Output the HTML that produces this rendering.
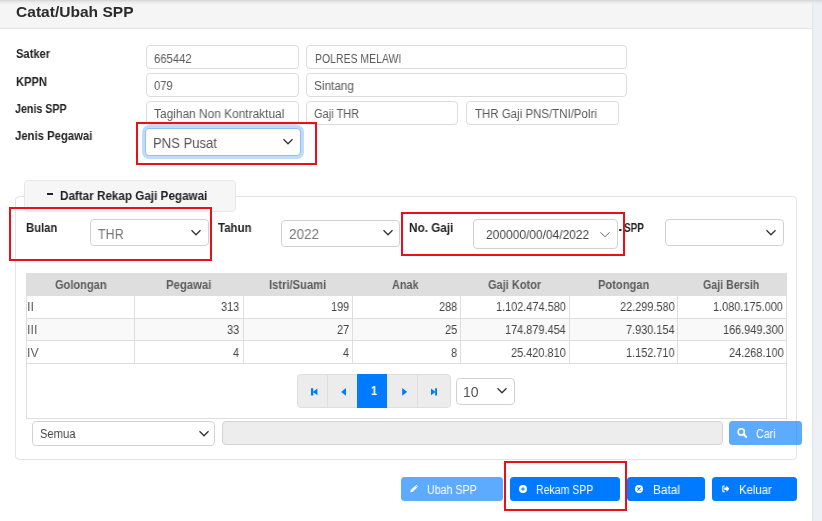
<!DOCTYPE html>
<html><head><meta charset="utf-8">
<style>
*{box-sizing:border-box;margin:0;padding:0}
html,body{width:822px;height:521px;overflow:hidden;background:#fff;font-family:"Liberation Sans",sans-serif;color:#333}
body{position:relative}
.abs,.t,.chev{position:absolute}
.t{white-space:nowrap;transform-origin:0 50%;display:block;will-change:transform}
.side{left:812px;top:0;width:10px;height:521px;background:#edf1f6;box-shadow:inset 2px 0 2px -1px #e0e4e9}
.hdr{left:0;top:0;width:812px;height:29px;background:#f5f5f5;border-bottom:1px solid #e3e3e3}
.hdr:before{content:"";position:absolute;left:0;top:0;width:100%;height:4.5px;background:linear-gradient(#d4d4d4,#ebebeb 45%,#f5f5f5)}
.side:before{content:"";position:absolute;left:0;top:0;width:100%;height:4.5px;background:linear-gradient(#d2d5d9,#e5e9ee 45%,rgba(237,241,246,0))}
.inp{height:23.6px;border:1px solid #dcdcdc;border-radius:4px;background:#fff}
.sel{border:1px solid #d2d2d2;border-radius:4px;background:#fff}
.red{border:2.5px solid #ea1019;z-index:5}
.fs{left:15.3px;top:196px;width:781.5px;height:263.7px;border:1px solid #e4e4e4;border-radius:4px}
.legend{left:24.3px;top:180.3px;width:211.5px;height:31.4px;background:#f6f6f6;border:1px solid #e8e8e8;border-radius:4px}
.btn{height:24px;border-radius:3.5px;top:477px}
.pg{height:34px;top:374px;background:#ececec;border:1px solid #dedede}
.vl{top:296px;width:1px;height:67px;background:#dedede}
.hl{left:26px;width:760.5px;height:1px;background:#dedede}
</style></head><body>
<div class="abs side"></div>
<div class="abs hdr"></div>

<div class="abs inp" style="left:146.3px;top:45.4px;width:153px"></div>
<div class="abs inp" style="left:306.2px;top:45.4px;width:320.6px"></div>
<div class="abs inp" style="left:146.3px;top:73.2px;width:153px"></div>
<div class="abs inp" style="left:306.2px;top:73.2px;width:320.6px"></div>
<div class="abs inp" style="left:146.3px;top:101px;width:153px"></div>
<div class="abs inp" style="left:306.2px;top:101px;width:152.3px"></div>
<div class="abs inp" style="left:466.3px;top:101px;width:152.3px"></div>

<div class="abs sel" style="left:145.3px;top:127.7px;width:155.4px;height:28.1px;border-color:#8ec0fb;box-shadow:0 0 0 3px #bfdbfd"></div>
<svg class="chev" style="left:282.3px;top:138.3px" width="12" height="8" viewBox="0 0 12 8"><path d="M1.5 1.3 L6 5.8 L10.5 1.3" fill="none" stroke="#333" stroke-width="1.3"/></svg>
<div class="abs red" style="left:135.9px;top:122px;width:181.2px;height:42.7px"></div>

<div class="abs fs"></div>
<div class="abs legend"></div>
<div class="abs" style="left:46.7px;top:192.5px;width:6.8px;height:2.3px;background:#222"></div>

<div class="abs sel" style="left:89.6px;top:219.3px;width:119.5px;height:27px"></div>
<svg class="chev" style="left:190.3px;top:228.8px" width="12" height="8" viewBox="0 0 12 8"><path d="M1.5 1.3 L6 5.8 L10.5 1.3" fill="none" stroke="#333" stroke-width="1.3"/></svg>
<div class="abs red" style="left:8.7px;top:207px;width:203.7px;height:53.5px"></div>

<div class="abs sel" style="left:281.2px;top:219.5px;width:119.1px;height:27px"></div>
<svg class="chev" style="left:381.6px;top:229.2px" width="12" height="8" viewBox="0 0 12 8"><path d="M1.5 1.3 L6 5.8 L10.5 1.3" fill="none" stroke="#333" stroke-width="1.3"/></svg>

<div class="abs sel" style="left:473.2px;top:219.2px;width:144.6px;height:30.2px"></div>
<svg class="chev" style="left:599.3px;top:230.7px" width="12" height="8" viewBox="0 0 12 8"><path d="M1.5 1.3 L6 5.8 L10.5 1.3" fill="none" stroke="#666" stroke-width="1"/></svg>

<div class="abs sel" style="left:665px;top:219.4px;width:119.2px;height:27.1px"></div>
<svg class="chev" style="left:765.4px;top:228.8px" width="12" height="8" viewBox="0 0 12 8"><path d="M1.5 1.3 L6 5.8 L10.5 1.3" fill="none" stroke="#333" stroke-width="1.3"/></svg>

<!-- table -->
<div class="abs" style="left:26px;top:272.7px;width:760.5px;height:146.5px;border:1px solid #dedede;border-top:none"></div>
<div class="abs" style="left:26px;top:272.7px;width:760.5px;height:23.3px;background:#dedede"></div>
<div class="abs" style="left:26.5px;top:318.5px;width:759.5px;height:22px;background:#f9f9f9"></div>
<div class="abs hl" style="top:317.8px"></div>
<div class="abs hl" style="top:340.2px"></div>
<div class="abs hl" style="top:362.8px"></div>
<div class="abs vl" style="left:134.3px"></div>
<div class="abs vl" style="left:243px"></div>
<div class="abs vl" style="left:351.6px"></div>
<div class="abs vl" style="left:460.1px"></div>
<div class="abs vl" style="left:568.6px"></div>
<div class="abs vl" style="left:677.1px"></div>

<!-- paginator -->
<div class="abs pg" style="left:297.3px;width:153.4px;border-radius:4px"></div>
<div class="abs" style="left:327.4px;top:375px;width:1px;height:32px;background:#dedede"></div>
<div class="abs" style="left:417.4px;top:375px;width:1px;height:32px;background:#dedede"></div>
<div class="abs" style="left:357px;top:374px;width:30px;height:34px;background:#007bff"></div>
<svg class="abs" style="left:311.2px;top:387.9px" width="6.4" height="7.8" viewBox="0 0 7 8"><path d="M0 0h2.5v8H0zM7 0.4v7.2L2 4z" fill="#007bff"/></svg>
<svg class="abs" style="left:341.3px;top:387.9px" width="5.2" height="7.8" viewBox="0 0 5 8"><path d="M5 0v8L0 4z" fill="#007bff"/></svg>
<svg class="abs" style="left:401.6px;top:387.9px" width="5.2" height="7.8" viewBox="0 0 5 8"><path d="M0 0v8L5 4z" fill="#007bff"/></svg>
<svg class="abs" style="left:431px;top:387.9px" width="6.4" height="7.8" viewBox="0 0 7 8"><path d="M4.5 0h2.5v8H4.5zM0 0.4v7.2L5 4z" fill="#007bff"/></svg>

<div class="abs sel" style="left:455.5px;top:377.5px;width:59px;height:27px"></div>
<svg class="chev" style="left:496.4px;top:387px" width="12" height="8" viewBox="0 0 12 8"><path d="M1.5 1.3 L6 5.8 L10.5 1.3" fill="none" stroke="#333" stroke-width="1.3"/></svg>

<div class="abs sel" style="left:32.3px;top:421.2px;width:183px;height:24.4px"></div>
<svg class="chev" style="left:197.5px;top:430.2px" width="12" height="8" viewBox="0 0 12 8"><path d="M1.5 1.3 L6 5.8 L10.5 1.3" fill="none" stroke="#333" stroke-width="1.3"/></svg>
<div class="abs" style="left:222.3px;top:421px;width:500.4px;height:23.6px;background:#ededed;border:1px solid #d4d4d4;border-radius:4px"></div>
<div class="abs btn" style="left:729px;top:421px;width:73px;height:23.8px;background:rgba(0,123,255,.64)"></div>

<div class="abs btn" style="left:401.2px;width:101.8px;background:rgba(0,123,255,.64)"></div>
<div class="abs btn" style="left:509.7px;width:110.3px;background:#007bff"></div>
<div class="abs btn" style="left:626.6px;width:78.4px;background:#007bff"></div>
<div class="abs btn" style="left:712px;width:85.3px;background:#007bff"></div>
<div class="abs red" style="left:504px;top:460.9px;width:122.5px;height:49.9px"></div>
<div class="abs red" style="left:401.1px;top:211.6px;width:224.2px;height:44.8px"></div>

<!-- button icons -->
<svg class="abs" style="left:736.7px;top:428.3px" width="10.3" height="9.8" viewBox="0 0 10 10"><circle cx="4.1" cy="4" r="3.15" fill="none" stroke="#fff" stroke-width="1.6"/><path d="M6.5 6.4 L9.3 9.2" stroke="#fff" stroke-width="1.9" stroke-linecap="round"/></svg>
<svg class="abs" style="left:410px;top:485.2px" width="8.3" height="7.5" viewBox="0 0 10 9"><path d="M0.3 8.7 L0.9 6.1 L6.4 0.9 L8.6 3.1 L3 8.3 Z" fill="#fff"/><path d="M7.1 0.4 L7.9 -0.2 L9.8 1.7 L9.2 2.5 Z" fill="#fff"/></svg>
<svg class="abs" style="left:518.9px;top:484.5px" width="8" height="8" viewBox="0 0 10 10"><circle cx="5" cy="5" r="5" fill="#fff"/><path d="M5 2.7v4.6M2.7 5h4.6" stroke="#007bff" stroke-width="1.25"/></svg>
<svg class="abs" style="left:635.4px;top:484.8px" width="8" height="8" viewBox="0 0 10 10"><circle cx="5" cy="5" r="5" fill="#fff"/><path d="M3.1 3.1l3.8 3.8M6.9 3.1l-3.8 3.8" stroke="#007bff" stroke-width="1.35"/></svg>
<svg class="abs" style="left:721.6px;top:485px" width="7.6" height="7.6" viewBox="0 0 10 10"><path d="M3.6 0.6H1.6 Q0.4 0.6 0.4 1.8V8.2Q0.4 9.4 1.6 9.4H3.6V8H1.9V2H3.6Z" fill="#fff"/><path d="M3 3.4H5.8V1L10 5L5.8 9V6.6H3Z" fill="#fff"/></svg>

<span class="t" style="left:15.60px;top:4.44px;font-size:15px;line-height:15px;font-weight:bold;color:#2b2b2b;transform:scaleX(1.0366)">Catat/Ubah SPP</span>
<span class="t" style="left:15.70px;top:48.33px;font-size:12px;line-height:12px;font-weight:bold;color:#222;transform:scaleX(0.9292)">Satker</span>
<span class="t" style="left:15.70px;top:75.83px;font-size:12px;line-height:12px;font-weight:bold;color:#222;transform:scaleX(0.9243)">KPPN</span>
<span class="t" style="left:15.00px;top:102.83px;font-size:12px;line-height:12px;font-weight:bold;color:#222;transform:scaleX(0.8892)">Jenis SPP</span>
<span class="t" style="left:15.00px;top:130.33px;font-size:12px;line-height:12px;font-weight:bold;color:#222;transform:scaleX(0.9424)">Jenis Pegawai</span>
<span class="t" style="left:154.20px;top:52.63px;font-size:12px;line-height:12px;font-weight:normal;color:#5a5a5a;transform:scaleX(0.9413)">665442</span>
<span class="t" style="left:314.50px;top:52.63px;font-size:12px;line-height:12px;font-weight:normal;color:#5a5a5a;transform:scaleX(0.8724)">POLRES MELAWI</span>
<span class="t" style="left:154.20px;top:80.23px;font-size:12px;line-height:12px;font-weight:normal;color:#5a5a5a;transform:scaleX(0.9338)">079</span>
<span class="t" style="left:314.20px;top:80.23px;font-size:12px;line-height:12px;font-weight:normal;color:#5a5a5a;transform:scaleX(0.9819)">Sintang</span>
<span class="t" style="left:154.20px;top:107.73px;font-size:12px;line-height:12px;font-weight:normal;color:#5a5a5a;transform:scaleX(0.9919)">Tagihan Non Kontraktual</span>
<span class="t" style="left:314.20px;top:107.73px;font-size:12px;line-height:12px;font-weight:normal;color:#5a5a5a;transform:scaleX(0.9181)">Gaji THR</span>
<span class="t" style="left:474.50px;top:107.73px;font-size:12px;line-height:12px;font-weight:normal;color:#5a5a5a;transform:scaleX(0.9567)">THR Gaji PNS/TNI/Polri</span>
<span class="t" style="left:153.27px;top:135.57px;font-size:14px;line-height:14px;font-weight:normal;color:#555;transform:scaleX(0.9336)">PNS Pusat</span>
<span class="t" style="left:60.20px;top:189.63px;font-size:12px;line-height:12px;font-weight:bold;color:#222;transform:scaleX(0.9731)">Daftar Rekap Gaji Pegawai</span>
<span class="t" style="left:26.30px;top:221.83px;font-size:12px;line-height:12px;font-weight:bold;color:#222;transform:scaleX(0.9393)">Bulan</span>
<span class="t" style="left:98.10px;top:226.57px;font-size:14px;line-height:14px;font-weight:normal;color:#777;transform:scaleX(0.8932)">THR</span>
<span class="t" style="left:218.00px;top:221.83px;font-size:12px;line-height:12px;font-weight:bold;color:#222;transform:scaleX(0.9548)">Tahun</span>
<span class="t" style="left:289.30px;top:227.37px;font-size:14px;line-height:14px;font-weight:normal;color:#777;transform:scaleX(0.9694)">2022</span>
<span class="t" style="left:409.40px;top:221.83px;font-size:12px;line-height:12px;font-weight:bold;color:#222;transform:scaleX(0.9777)">No. Gaji</span>
<span class="t" style="left:486.00px;top:228.20px;font-size:13px;line-height:13px;font-weight:normal;color:#444;transform:scaleX(0.9211)">200000/00/04/2022</span>
<span class="t" style="left:618.10px;top:221.44px;font-size:12px;line-height:12px;font-weight:bold;color:#222;transform:scaleX(1.4000)">.</span>
<span class="t" style="left:624.00px;top:221.83px;font-size:12px;line-height:12px;font-weight:bold;color:#222;transform:scaleX(0.8289)">SPP</span>
<span class="t" style="left:54.80px;top:278.63px;font-size:12px;line-height:12px;font-weight:bold;color:#5c5c5c;transform:scaleX(0.9198)">Golongan</span>
<span class="t" style="left:166.40px;top:278.63px;font-size:12px;line-height:12px;font-weight:bold;color:#5c5c5c;transform:scaleX(0.9436)">Pegawai</span>
<span class="t" style="left:268.60px;top:278.63px;font-size:12px;line-height:12px;font-weight:bold;color:#5c5c5c;transform:scaleX(0.9325)">Istri/Suami</span>
<span class="t" style="left:392.30px;top:278.63px;font-size:12px;line-height:12px;font-weight:bold;color:#5c5c5c;transform:scaleX(0.9033)">Anak</span>
<span class="t" style="left:488.20px;top:278.63px;font-size:12px;line-height:12px;font-weight:bold;color:#5c5c5c;transform:scaleX(0.9172)">Gaji Kotor</span>
<span class="t" style="left:598.00px;top:278.63px;font-size:12px;line-height:12px;font-weight:bold;color:#5c5c5c;transform:scaleX(0.9274)">Potongan</span>
<span class="t" style="left:703.30px;top:278.63px;font-size:12px;line-height:12px;font-weight:bold;color:#5c5c5c;transform:scaleX(0.8885)">Gaji Bersih</span>
<span class="t" style="left:27.43px;top:301.23px;font-size:12px;line-height:12px;font-weight:normal;color:#666;transform:scaleX(1.0686)">II</span>
<span class="t" style="left:221.28px;top:301.23px;font-size:12px;line-height:12px;font-weight:normal;color:#444;transform:scaleX(0.9100)">313</span>
<span class="t" style="left:330.68px;top:301.23px;font-size:12px;line-height:12px;font-weight:normal;color:#444;transform:scaleX(0.9100)">199</span>
<span class="t" style="left:438.58px;top:301.23px;font-size:12px;line-height:12px;font-weight:normal;color:#444;transform:scaleX(0.9100)">288</span>
<span class="t" style="left:495.67px;top:301.23px;font-size:12px;line-height:12px;font-weight:normal;color:#444;transform:scaleX(0.9100)">1.102.474.580</span>
<span class="t" style="left:619.55px;top:301.23px;font-size:12px;line-height:12px;font-weight:normal;color:#444;transform:scaleX(0.9100)">22.299.580</span>
<span class="t" style="left:713.47px;top:301.23px;font-size:12px;line-height:12px;font-weight:normal;color:#444;transform:scaleX(0.9100)">1.080.175.000</span>
<span class="t" style="left:27.46px;top:323.83px;font-size:12px;line-height:12px;font-weight:normal;color:#666;transform:scaleX(1.0383)">III</span>
<span class="t" style="left:227.36px;top:323.83px;font-size:12px;line-height:12px;font-weight:normal;color:#444;transform:scaleX(0.9100)">33</span>
<span class="t" style="left:336.76px;top:323.83px;font-size:12px;line-height:12px;font-weight:normal;color:#444;transform:scaleX(0.9100)">27</span>
<span class="t" style="left:444.66px;top:323.83px;font-size:12px;line-height:12px;font-weight:normal;color:#444;transform:scaleX(0.9100)">25</span>
<span class="t" style="left:504.78px;top:323.83px;font-size:12px;line-height:12px;font-weight:normal;color:#444;transform:scaleX(0.9100)">174.879.454</span>
<span class="t" style="left:625.62px;top:323.83px;font-size:12px;line-height:12px;font-weight:normal;color:#444;transform:scaleX(0.9100)">7.930.154</span>
<span class="t" style="left:722.58px;top:323.83px;font-size:12px;line-height:12px;font-weight:normal;color:#444;transform:scaleX(0.9100)">166.949.300</span>
<span class="t" style="left:27.47px;top:346.63px;font-size:12px;line-height:12px;font-weight:normal;color:#666;transform:scaleX(1.0257)">IV</span>
<span class="t" style="left:233.43px;top:346.63px;font-size:12px;line-height:12px;font-weight:normal;color:#444;transform:scaleX(0.9100)">4</span>
<span class="t" style="left:342.83px;top:346.63px;font-size:12px;line-height:12px;font-weight:normal;color:#444;transform:scaleX(0.9100)">4</span>
<span class="t" style="left:450.73px;top:346.63px;font-size:12px;line-height:12px;font-weight:normal;color:#444;transform:scaleX(0.9100)">8</span>
<span class="t" style="left:510.85px;top:346.63px;font-size:12px;line-height:12px;font-weight:normal;color:#444;transform:scaleX(0.9100)">25.420.810</span>
<span class="t" style="left:625.62px;top:346.63px;font-size:12px;line-height:12px;font-weight:normal;color:#444;transform:scaleX(0.9100)">1.152.710</span>
<span class="t" style="left:728.65px;top:346.63px;font-size:12px;line-height:12px;font-weight:normal;color:#444;transform:scaleX(0.9100)">24.268.100</span>
<span class="t" style="left:371.08px;top:385.03px;font-size:12px;line-height:12px;font-weight:bold;color:#fff;transform:scaleX(0.9200)">1</span>
<span class="t" style="left:463.31px;top:385.07px;font-size:14px;line-height:14px;font-weight:normal;color:#555;transform:scaleX(0.9942)">10</span>
<span class="t" style="left:40.10px;top:428.07px;font-size:12.5px;line-height:12.5px;font-weight:normal;color:#444;transform:scaleX(0.8952)">Semua</span>
<span class="t" style="left:755.70px;top:427.93px;font-size:12px;line-height:12px;font-weight:normal;color:#fff;transform:scaleX(0.8905)">Cari</span>
<span class="t" style="left:427.40px;top:484.13px;font-size:12px;line-height:12px;font-weight:normal;color:#fff;transform:scaleX(0.8870)">Ubah SPP</span>
<span class="t" style="left:536.40px;top:484.13px;font-size:12px;line-height:12px;font-weight:normal;color:#fff;transform:scaleX(0.8783)">Rekam SPP</span>
<span class="t" style="left:652.80px;top:484.13px;font-size:12px;line-height:12px;font-weight:normal;color:#fff;transform:scaleX(0.9818)">Batal</span>
<span class="t" style="left:738.60px;top:484.13px;font-size:12px;line-height:12px;font-weight:normal;color:#fff;transform:scaleX(0.9455)">Keluar</span>
</body></html>
